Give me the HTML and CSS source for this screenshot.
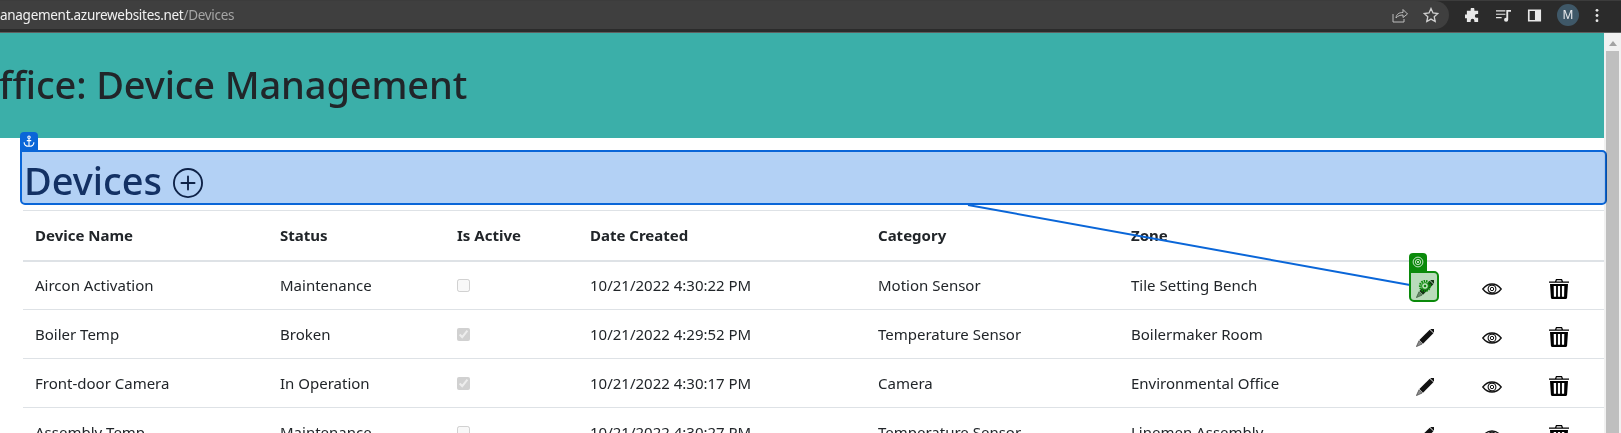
FILE: index.html
```html
<!DOCTYPE html>
<html lang="en">
<head>
    <meta charset="UTF-8">
    <title>Devices</title>
    <link rel="stylesheet" href="styles.css">
</head>
<body>
    <div class="chrome-bar">
        <div class="omnibox">
            <div class="url"><span class="url-host">anagement.azurewebsites.net</span><span class="url-path">/Devices</span></div>
            <svg class="chrome-icon" viewBox="0 0 16 16" fill="none" stroke="#bdbdbd" stroke-width="1"><path d="M1 7v8h11v-3"/><path d="M4 11c.5-4 3-5.500 7-5.500V2.500L15.500 7 11 10.500V8c-3 0-5 .8-7 3z"/></svg>
            <svg class="chrome-icon" viewBox="0 0 16 16" fill="none" stroke="#d0d0d0" stroke-width="1.300"><path d="M8 1.500l2 4.500 4.800.5-3.600 3.200 1 4.800L8 12.100 3.800 14.500l1-4.800L1.200 6.500 6 6z"/></svg>
        </div>
        <div class="chrome-tools">
            <svg class="tool-icon" viewBox="0 0 16 16" fill="#e8e8e8"><path d="M6 1.500a2 2 0 0 1 4 0V3h4v3.500h-1.500a2 2 0 0 0 0 4H14V15H10v-1.500a2 2 0 0 0-4 0V15H2v-4H.5a2 2 0 0 1 0-4H2V3h4z"/></svg>
            <svg class="tool-icon" viewBox="0 0 16 16" fill="#e8e8e8"><path d="M0 2.500h10v1.300H0zM0 6h10v1.300H0zM0 9.500h6v1.300H0zM11 2h5v2h-3v8.500a2.200 2.200 0 1 1-2-2.100z"/></svg>
            <svg class="tool-icon" viewBox="0 0 16 16" fill="#e8e8e8"><path fill-rule="evenodd" d="M1 1.500h14v13H1zM2.800 3.200v9.600h5.700V3.200z"/></svg>
            <div class="avatar">M</div>
            <svg class="tool-icon dots" viewBox="0 0 4 16" fill="#e8e8e8"><circle cx="2" cy="2.500" r="1.500"/><circle cx="2" cy="8" r="1.500"/><circle cx="2" cy="13.500" r="1.500"/></svg>
        </div>
    </div>

    <div class="viewport">
        <main class="page">
            <header class="site-header">
                <h1>ffice: Device Management</h1>
            </header>

            <div class="heading-wrap">
                <h2 class="page-title">Devices
                    <svg class="add-icon" viewBox="0 0 16 16" fill="currentColor"><path d="M8 15A7 7 0 1 1 8 1a7 7 0 0 1 0 14zm0 1A8 8 0 1 0 8 0a8 8 0 0 0 0 16z"/><path d="M8 4a.5.5 0 0 1 .5.5v3h3a.5.5 0 0 1 0 1h-3v3a.5.5 0 0 1-1 0v-3h-3a.5.5 0 0 1 0-1h3v-3A.5.5 0 0 1 8 4z"/></svg>
                </h2>
            </div>

            <table class="devices">
                <colgroup>
                    <col class="c-name"><col class="c-status"><col class="c-active"><col class="c-date"><col class="c-cat"><col class="c-zone"><col class="c-act"><col class="c-act"><col class="c-last">
                </colgroup>
                <thead>
                    <tr>
                        <th>Device Name</th><th>Status</th><th>Is Active</th><th>Date Created</th><th>Category</th><th>Zone</th><th></th><th></th><th></th>
                    </tr>
                </thead>
                <tbody>
                    <tr>
                        <td>Aircon Activation</td><td>Maintenance</td><td><input type="checkbox" disabled></td><td>10/21/2022 4:30:22 PM</td><td>Motion Sensor</td><td>Tile Setting Bench</td>
                        <td class="act"><svg class="icon pencil" viewBox="0 0 16 16"><use href="#pencil"/></svg></td>
                        <td class="act"><svg class="icon eye" viewBox="0 0 20 12"><use href="#eye"/></svg></td>
                        <td class="act"><svg class="icon trash" viewBox="0 0 20 20"><use href="#trash"/></svg></td>
                    </tr>
                    <tr>
                        <td>Boiler Temp</td><td>Broken</td><td><input type="checkbox" checked disabled></td><td>10/21/2022 4:29:52 PM</td><td>Temperature Sensor</td><td>Boilermaker Room</td>
                        <td class="act"><svg class="icon pencil" viewBox="0 0 16 16"><use href="#pencil"/></svg></td>
                        <td class="act"><svg class="icon eye" viewBox="0 0 20 12"><use href="#eye"/></svg></td>
                        <td class="act"><svg class="icon trash" viewBox="0 0 20 20"><use href="#trash"/></svg></td>
                    </tr>
                    <tr>
                        <td>Front-door Camera</td><td>In Operation</td><td><input type="checkbox" checked disabled></td><td>10/21/2022 4:30:17 PM</td><td>Camera</td><td>Environmental Office</td>
                        <td class="act"><svg class="icon pencil" viewBox="0 0 16 16"><use href="#pencil"/></svg></td>
                        <td class="act"><svg class="icon eye" viewBox="0 0 20 12"><use href="#eye"/></svg></td>
                        <td class="act"><svg class="icon trash" viewBox="0 0 20 20"><use href="#trash"/></svg></td>
                    </tr>
                    <tr>
                        <td>Assembly Temp</td><td>Maintenance</td><td><input type="checkbox" disabled></td><td>10/21/2022 4:30:27 PM</td><td>Temperature Sensor</td><td>Linemen Assembly</td>
                        <td class="act"><svg class="icon pencil" viewBox="0 0 16 16"><use href="#pencil"/></svg></td>
                        <td class="act"><svg class="icon eye" viewBox="0 0 20 12"><use href="#eye"/></svg></td>
                        <td class="act"><svg class="icon trash" viewBox="0 0 20 20"><use href="#trash"/></svg></td>
                    </tr>
                </tbody>
            </table>

            <!-- inspector overlay -->
            <div class="anchor-box"></div>
            <div class="anchor-tab">
                <svg viewBox="0 0 16 16" fill="none" stroke="#fff" stroke-width="1.500"><circle cx="8" cy="3" r="1.600"/><path d="M8 4.500V15M5 7.500h6M1.500 9.500c0 3.500 3 5.500 6.500 5.500s6.500-2 6.500-5.500"/></svg>
            </div>
            <svg class="link-line" viewBox="0 0 1605 400"><line x1="968" y1="172" x2="1410" y2="252"/></svg>
            <div class="target-tab">
                <svg viewBox="0 0 16 16" fill="none" stroke="#fff"><circle cx="8" cy="8" r="6.500"/><circle cx="8" cy="8" r="3.500"/><circle cx="8" cy="8" r="1.200" fill="#fff" stroke="none"/></svg>
            </div>
            <div class="target-box">
                <svg viewBox="0 0 16 16" fill="none" stroke="#0b8a0b"><circle cx="8" cy="8" r="5" stroke-width="2.200" stroke-dasharray="1.500 .9"/><circle cx="8" cy="8" r="3.400" fill="#bfe3bf" stroke-width="1"/><circle cx="8" cy="8" r="1.300" fill="#0b8a0b" stroke="none"/></svg>
            </div>
        </main>
        <div class="scrollbar">
            <div class="scroll-arrow"></div>
            <div class="scroll-thumb"></div>
        </div>
    </div>

    <svg class="defs" width="0" height="0">
        <defs>
            <symbol id="pencil" viewBox="0 0 16 16">
                <g transform="rotate(45 8 8)">
                    <rect x="5.700" y="-3.200" width="4.600" height="2.400" rx=".7"/>
                    <rect x="5.700" y="-.2" width="4.600" height="13"/>
                    <path d="M6 13.500h4L8 18.800z" fill="#8a8a8a" stroke="#555" stroke-width=".7"/>
                </g>
            </symbol>
            <symbol id="eye" viewBox="0 0 20 12">
                <g fill="none" stroke="#111">
                    <path d="M.8 6C3.500 2.500 6.500 1 10 1s6.500 1.500 9.200 5c-2.700 3.500-5.700 5-9.200 5S3.500 9.500.8 6z" stroke-width="1.300"/>
                    <circle cx="10" cy="6" r="3.900" stroke-width="1.100"/>
                    <circle cx="10" cy="6" r="1.700" stroke-width="1"/>
                </g>
            </symbol>
            <symbol id="trash" viewBox="0 0 20 20"><path fill-rule="evenodd" d="M7 0h6l1 2.500h6v1.200H0V2.500h6zM7.800 1.200 7.400 2.500h5.200l-.4-1.300zM1 5h18l-.9 13.500c0 .9-.7 1.500-1.500 1.500H3.400c-.8 0-1.500-.6-1.500-1.500zM4.700 7l.2 10.800h2.200V7zM8.900 7v10.800h2.200V7zM12.900 7v10.800h2.200l.2-10.800z"/></symbol>
        </defs>
    </svg>
</body>
</html>
```

FILE: styles.css
```css
* {
    box-sizing: border-box;
}
html, body {
    margin: 0;
    height: 100%;
    overflow: hidden;
}
body {
    font: 16px / 1.5 "Noto Sans", "Open Sans", sans-serif;
    color: #212529;
    background-color: #fff;
}

/* browser toolbar */
.chrome-bar {
    height: 33px;
    display: flex;
    align-items: center;
    padding-bottom: 3px;
    background-color: #2b2b2b;
    border-top: 1px solid #3c3c3c;
    border-bottom: 1px solid #5f5f5f;
}
.omnibox {
    flex: none;
    width: 1449px;
    height: 28px;
    display: flex;
    align-items: center;
    gap: 15px;
    padding-right: 10px;
    background-color: #3f3f3f;
    border-radius: 0 14px 14px 0;
}
.url {
    flex: 1;
    font-size: 13.5px;
    letter-spacing: -.29px;
    white-space: nowrap;
}
.url-host {
    color: #f1f1f1;
}
.url-path {
    color: #a5a5a5;
}
.chrome-icon {
    width: 16px;
    height: 16px;
}
.chrome-tools {
    flex: 1;
    display: flex;
    align-items: center;
    gap: 16px;
    padding-left: 16px;
}
.tool-icon {
    width: 15px;
    height: 15px;
}
.tool-icon.dots {
    width: 4px;
    margin-left: 1px;
}
.avatar {
    width: 22px;
    height: 22px;
    margin: 0 -1px;
    border-radius: 50%;
    background-color: #3f5868;
    color: #e8eaed;
    font-size: 12px;
    line-height: 22px;
    text-align: center;
}

/* page */
.viewport {
    height: 400px;
    display: flex;
}
.page {
    flex: 1;
    position: relative;
    min-width: 0;
}
.scrollbar {
    width: 17px;
    display: flex;
    flex-direction: column;
    background-color: #f1f1f1;
    padding: 8px 2px 0;
}
.scroll-arrow {
    width: 0;
    height: 0;
    margin: 0 auto 5px;
    border: 4px solid transparent;
    border-top: 0;
    border-bottom: 5px solid #a3a3a3;
}
.scroll-thumb {
    flex: 1;
    background-color: #bfbfbf;
}
.site-header {
    height: 105px;
    display: flex;
    align-items: center;
    padding-bottom: 2px;
    background-color: #3bafa9;
}
.site-header h1 {
    margin: 0 0 0 -1px;
    font-size: 38px;
    font-weight: 500;
    letter-spacing: -.13px;
    line-height: 1.2;
    white-space: nowrap;
}
.heading-wrap {
    margin: 15px 0 0 20px;
    padding: 0 4px;
    height: 51px;
}
.page-title {
    margin: 0;
    height: 51px;
    padding-top: 4px;
    display: flex;
    align-items: center;
    gap: 11px;
    font-size: 38px;
    font-weight: 500;
    line-height: 1.2;
    color: #1b3c68;
}
.add-icon {
    width: 30px;
    height: 30px;
    margin-top: 4px;
    color: #14294a;
}

/* table */
.devices {
    width: 1581px;
    margin: 6px 0 0 23px;
    border-collapse: collapse;
    table-layout: fixed;
    border-top: 1px solid #dee2e6;
}
.c-name { width: 245px; }
.c-status { width: 177px; }
.c-active { width: 133px; }
.c-date { width: 288px; }
.c-cat { width: 253px; }
.c-zone { width: 272px; }
.c-act { width: 67px; }
.c-last { width: 79px; }
.devices th,
.devices td {
    padding: 12px;
    text-align: left;
    vertical-align: middle;
    border-bottom: 1px solid #dee2e6;
    white-space: nowrap;
    font-size: 15px;
}
.devices th {
    height: 50px;
    font-weight: 700;
    border-bottom: 2px solid #dee2e6;
}
.devices td {
    height: 49px;
}
.devices td.act {
    padding: 4px 0 0;
    text-align: center;
}
.devices td.act:last-child {
    padding-right: 11px;
}
.devices input {
    width: 13px;
    height: 13px;
    margin: 0;
    vertical-align: -1px;
}
.icon {
    display: inline-block;
    width: 20px;
    height: 20px;
    vertical-align: middle;
    fill: #111;
}
.icon.pencil {
    width: 18px;
    height: 18px;
}
.icon.eye {
    height: 12px;
}
.icon.trash {
    fill: #000;
}

/* inspector overlay */
.anchor-box {
    position: absolute;
    left: 20px;
    top: 117px;
    width: 1587px;
    height: 55px;
    border: 2px solid #0a66d8;
    border-radius: 0 5px 5px 5px;
    background-color: #b3d1f5;
    mix-blend-mode: multiply;
}
.anchor-tab {
    position: absolute;
    left: 20px;
    top: 99px;
    width: 18px;
    height: 19px;
    padding: 3px;
    background-color: #0a66d8;
    border-radius: 4px 4px 0 0;
}
.anchor-tab svg,
.target-tab svg {
    display: block;
    width: 12px;
    height: 12px;
}
.link-line {
    position: absolute;
    left: 0;
    top: 0;
    width: 1605px;
    height: 400px;
    pointer-events: none;
}
.link-line line {
    stroke: #0a66d8;
    stroke-width: 2;
}
.target-tab {
    position: absolute;
    left: 1409px;
    top: 220px;
    width: 18px;
    height: 19px;
    padding: 3px;
    background-color: #0b8a0b;
    border-radius: 4px 4px 0 0;
}
.target-box {
    position: absolute;
    left: 1409px;
    top: 238px;
    width: 30px;
    height: 31px;
    padding: 5px 4px 5px 6px;
    border: 2px solid #0b8a0b;
    border-radius: 0 5px 5px 5px;
    background-color: rgba(25, 135, 30, .3);
}
.target-box svg {
    display: block;
}
.defs {
    position: absolute;
}
```
